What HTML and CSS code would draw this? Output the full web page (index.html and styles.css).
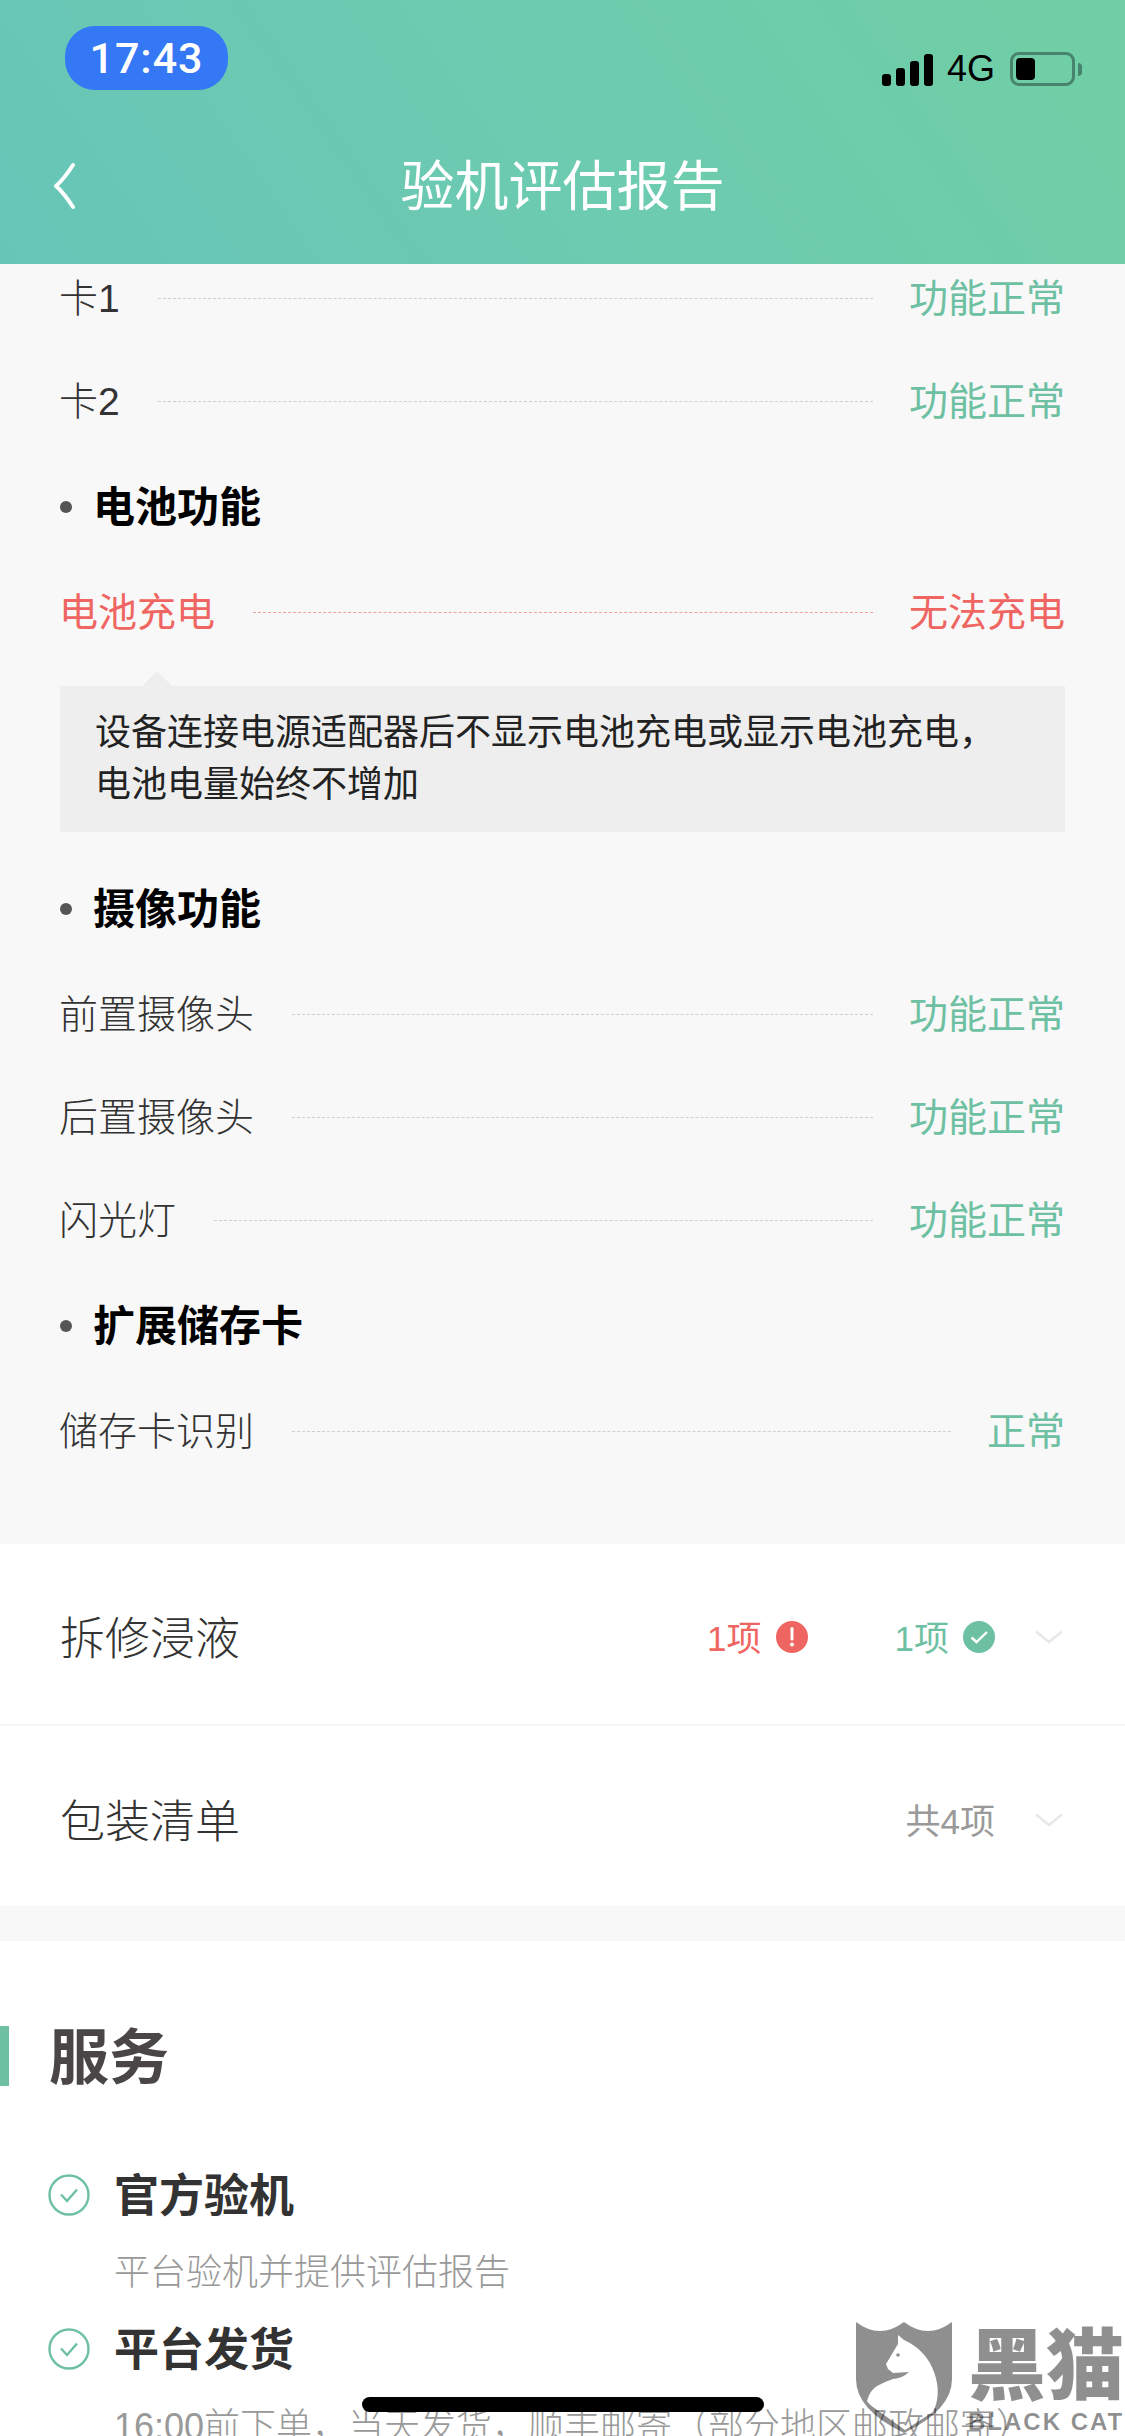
FILE: index.html
```html
<!DOCTYPE html>
<html lang="zh-CN">
<head>
    <meta charset="UTF-8">
    <meta name="viewport" content="width=device-width, initial-scale=1.0">
    <title>验机评估报告</title>
    <link rel="stylesheet" href="styles.css">
</head>
<body>
    <div class="screen">
        <header class="header">
            <div class="status-bar">
                <span class="time">17:43</span>
                <div class="status-icons">
                    <div class="signal">
                        <i class="bar bar-1"></i>
                        <i class="bar bar-2"></i>
                        <i class="bar bar-3"></i>
                        <i class="bar bar-4"></i>
                    </div>
                    <span class="network">4G</span>
                    <div class="battery"><i class="battery-level"></i></div>
                    <i class="battery-nub"></i>
                </div>
            </div>
            <div class="nav">
                <svg class="back" width="24" height="48" viewBox="0 0 24 48">
                    <path d="M21 3Q12 17 4 24Q12 31 21 45" fill="none" stroke="#fff" stroke-width="4" stroke-linecap="round" stroke-linejoin="round"/>
                </svg>
                <h1 class="nav-title">验机评估报告</h1>
            </div>
        </header>

        <section class="report">
            <div class="row"><span>卡1</span><i class="dots"></i><span class="ok">功能正常</span></div>
            <div class="row"><span>卡2</span><i class="dots"></i><span class="ok">功能正常</span></div>

            <h2 class="group">电池功能</h2>
            <div class="row row-bad"><span>电池充电</span><i class="dots"></i><span>无法充电</span></div>
            <p class="note">设备连接电源适配器后不显示电池充电或显示电池充电，<br>电池电量始终不增加</p>

            <h2 class="group">摄像功能</h2>
            <div class="row"><span>前置摄像头</span><i class="dots"></i><span class="ok">功能正常</span></div>
            <div class="row"><span>后置摄像头</span><i class="dots"></i><span class="ok">功能正常</span></div>
            <div class="row"><span>闪光灯</span><i class="dots"></i><span class="ok">功能正常</span></div>

            <h2 class="group">扩展储存卡</h2>
            <div class="row"><span>储存卡识别</span><i class="dots"></i><span class="ok">正常</span></div>
        </section>

        <section class="summary">
            <div class="summary-row">
                <span class="summary-name">拆修浸液</span>
                <span class="count count-bad">1项</span>
                <svg class="count-icon" width="32" height="32" viewBox="0 0 32 32">
                    <circle cx="16" cy="16" r="16" fill="#ef6561"/>
                    <path d="M16 7.5V18" stroke="#fff" stroke-width="3" stroke-linecap="round"/>
                    <circle cx="16" cy="23.5" r="2" fill="#fff"/>
                </svg>
                <span class="count count-ok">1项</span>
                <svg class="count-icon" width="32" height="32" viewBox="0 0 32 32">
                    <circle cx="16" cy="16" r="16" fill="#6dc0a2"/>
                    <path d="M8.5 16.5L13.5 21L24 11" fill="none" stroke="#fff" stroke-width="2.4"/>
                </svg>
                <svg class="chevron" width="28" height="14" viewBox="0 0 28 14">
                    <path d="M1 1.5L14 12L27 1.5" fill="none" stroke="#e8e8e8" stroke-width="2.6"/>
                </svg>
            </div>
            <div class="summary-row">
                <span class="summary-name">包装清单</span>
                <span class="count count-total">共4项</span>
                <svg class="chevron" width="28" height="14" viewBox="0 0 28 14">
                    <path d="M1 1.5L14 12L27 1.5" fill="none" stroke="#e8e8e8" stroke-width="2.6"/>
                </svg>
            </div>
        </section>

        <section class="services">
            <h2 class="services-title">服务</h2>
            <div class="service">
                <svg class="service-check" width="42" height="42" viewBox="0 0 42 42">
                    <circle cx="21" cy="21" r="19.5" fill="none" stroke="#6dc0a2" stroke-width="2.4"/>
                    <path d="M13 20.5L19 27L29 15.5" fill="none" stroke="#6dc0a2" stroke-width="2.4"/>
                </svg>
                <div class="service-text">
                    <h3 class="service-name">官方验机</h3>
                    <p class="service-desc">平台验机并提供评估报告</p>
                </div>
            </div>
            <div class="service">
                <svg class="service-check" width="42" height="42" viewBox="0 0 42 42">
                    <circle cx="21" cy="21" r="19.5" fill="none" stroke="#6dc0a2" stroke-width="2.4"/>
                    <path d="M13 20.5L19 27L29 15.5" fill="none" stroke="#6dc0a2" stroke-width="2.4"/>
                </svg>
                <div class="service-text">
                    <h3 class="service-name">平台发货</h3>
                    <p class="service-desc">16:00前下单，当天发货，顺丰邮寄（部分地区邮政邮寄）</p>
                </div>
            </div>
        </section>

        <i class="home-bar"></i>

        <!-- watermark sits over the page -->
        <div class="watermark">
            <svg class="watermark-logo" width="96" height="112" viewBox="0 0 96 112">
                <path fill-rule="evenodd" d="M0 0Q24 18 48 0Q72 18 96 0V57Q96 88 48 111Q0 88 0 57ZM42 13L48 18Q70 28 78 50Q86 72 77 90L49 108L17 85Q12 81 11 79Q14 68 21 64Q28 60 37 57Q47 56 53 50L37 51L32 47L30 42L36 32L42 22Z"/>
                <circle cx="42" cy="33" r="1.8"/>
            </svg>
            <div class="watermark-text">
                <span class="watermark-name">黑猫</span>
                <span class="watermark-en">BLACK CAT</span>
            </div>
        </div>
    </div>
</body>
</html>
```

FILE: styles.css
```css
:root {
    --green: #6dc0a2;
    --red: #ef6561;
    --text: #333;
    --grey: #999;
}

* {
    box-sizing: border-box;
}

body {
    margin: 0;
    font-family: "Liberation Sans", "Noto Sans CJK SC", sans-serif;
    background: #f8f8f8;
}

i {
    display: block;
}

.screen {
    position: relative;
    width: 1125px;
    height: 2436px;
    overflow: hidden;
    background: #f8f8f8;
}

/* header */
.header {
    height: 264px;
    padding-top: 26px;
    background: linear-gradient(235deg, #70cfa4 0%, #6dcbb0 50%, #67c5b8 100%);
}

.status-bar {
    display: flex;
    justify-content: space-between;
    height: 64px;
    padding: 0 43px 0 65px;
}

.time {
    width: 163px;
    height: 64px;
    border-radius: 30px;
    background: #3478f6;
    color: #fff;
    font-family: "Roboto", sans-serif;
    font-weight: 500;
    font-size: 43px;
    line-height: 64px;
    letter-spacing: 1px;
    text-align: center;
}

.status-icons {
    display: flex;
    align-items: flex-end;
    height: 60px;
}

.signal {
    display: flex;
    align-items: flex-end;
    gap: 5px;
    height: 33px;
    margin-right: 14px;
}

.bar {
    width: 9px;
    border-radius: 3px;
    background: #000;
}

.bar-1 { height: 12px; }
.bar-2 { height: 18px; }
.bar-3 { height: 25px; }
.bar-4 { height: 32px; }

.network {
    font-size: 36px;
    line-height: 34px;
    margin-right: 15px;
    color: #000;
}

.battery {
    width: 65px;
    height: 34px;
    padding: 3px;
    border: 3px solid #47836d;
    border-radius: 9px;
}

.battery-level {
    width: 19px;
    height: 22px;
    border-radius: 4px;
    background: #000;
}

.battery-nub {
    width: 4px;
    height: 13px;
    margin: 0 0 10px 3px;
    border-radius: 0 4px 4px 0;
    background: #47836d;
}

.nav {
    position: relative;
    display: flex;
    justify-content: center;
    margin-top: 64px;
}

.back {
    position: absolute;
    left: 52px;
    top: 8px;
}

.nav-title {
    margin: 0;
    color: #fff;
    font-weight: 400;
    font-size: 54px;
    line-height: 66px;
}

/* report list */
.report {
    height: 1280px;
    padding: 0 60px;
}

.row {
    display: flex;
    align-items: center;
    height: 68px;
    padding-bottom: 6px;
    margin: 0 0 35px -1px;
    color: var(--text);
    font-size: 39px;
    font-weight: 300;
}

.dots {
    flex: 1;
    margin: 6px 36px 0 38px;
    border-top: 1px dashed #cfcfcf;
}

.ok {
    color: var(--green);
    font-weight: 400;
}

.row-bad {
    margin-bottom: 40px;
    color: var(--red);
    font-weight: 400;
}

.row-bad .dots {
    border-top-color: #f0a09d;
}

.group {
    position: relative;
    height: 68px;
    margin: 37px 0 38px;
    padding-left: 33px;
    color: #000;
    font-size: 42px;
    font-weight: 700;
    line-height: 72px;
}

.group::before {
    content: "";
    position: absolute;
    left: 0;
    top: 29px;
    width: 12px;
    height: 12px;
    border-radius: 50%;
    background: #555;
}

.note {
    position: relative;
    margin: 0 0 42px;
    padding: 21px 35px;
    background: #eee;
    color: #222;
    font-size: 36px;
    line-height: 52px;
    white-space: nowrap;
}

.note::before {
    content: "";
    position: absolute;
    left: 82px;
    top: -15px;
    border-left: 15px solid transparent;
    border-right: 15px solid transparent;
    border-bottom: 15px solid #eee;
}

/* summary */
.summary {
    background: #fff;
}

.summary-row {
    display: flex;
    align-items: center;
    height: 180px;
    padding: 2px 62px 0 60px;
}

.summary-row + .summary-row {
    height: 182px;
    padding-top: 4px;
    border-top: 2px solid #f6f6f6;
}

.summary-name {
    margin-right: auto;
    color: var(--text);
    font-size: 45px;
    font-weight: 300;
}

.count {
    font-size: 35px;
}

.count-bad {
    color: var(--red);
}

.count-ok {
    margin-left: 87px;
    color: var(--green);
}

.count-total {
    color: var(--grey);
}

.count-icon {
    margin: 4px 0 0 14px;
}

.chevron {
    margin: 4px 0 0 40px;
}

/* services */
.services {
    height: 500px;
    margin-top: 35px;
    padding-top: 85px;
    background: #fff;
}

.services-title {
    height: 60px;
    margin: 0 0 88px;
    padding-left: 40px;
    border-left: 9px solid var(--green);
    color: #4a4648;
    font-size: 60px;
    font-weight: 700;
    line-height: 66px;
}

.service {
    display: flex;
    align-items: flex-start;
    padding-left: 48px;
}

.service-check {
    flex: none;
    margin-right: 24px;
}

.service-name {
    margin: -4px 0 0;
    color: var(--text);
    font-size: 45px;
    font-weight: 700;
    line-height: 54px;
}

.service-desc {
    margin: 26px 0 32px;
    color: var(--grey);
    font-size: 36px;
    font-weight: 300;
    line-height: 46px;
    white-space: nowrap;
}

.home-bar {
    position: absolute;
    left: 362px;
    top: 2397px;
    width: 402px;
    height: 15px;
    border-radius: 8px;
    background: #000;
}

/* watermark */
.watermark {
    position: absolute;
    left: 856px;
    top: 2322px;
    display: flex;
    gap: 16px;
    color: rgba(0, 0, 0, 0.44);
}

.watermark-logo {
    fill: currentColor;
}

.watermark-text {
    display: flex;
    flex-direction: column;
    width: 156px;
}

.watermark-name {
    margin-top: 6px;
    font-size: 78px;
    font-weight: 900;
    line-height: 78px;
    white-space: nowrap;
}

.watermark-en {
    margin-top: 4px;
    font-size: 24px;
    font-weight: 700;
    line-height: 24px;
    letter-spacing: 2px;
    white-space: nowrap;
}
```
